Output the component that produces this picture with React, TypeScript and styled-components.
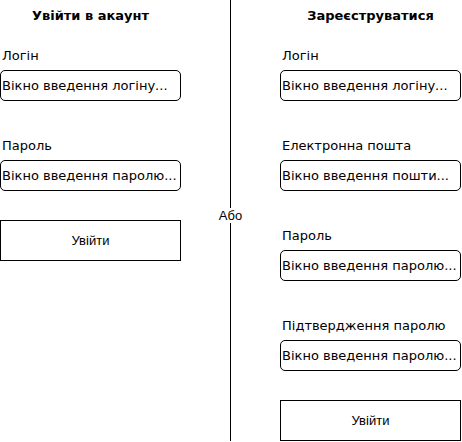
import React, { useId } from "react";
import styled, { createGlobalStyle } from "styled-components";

const GlobalStyle = createGlobalStyle`
  *, *::before, *::after {
    box-sizing: border-box;
  }
  body {
    margin: 0;
    background: #fff;
    color: #000;
    font-family: "DejaVu Sans", Verdana, sans-serif;
    font-size: 13px;
  }
`;

const Page = styled.main`
  display: grid;
  grid-template-columns: minmax(0, 1fr) 99px minmax(0, 1fr);
  padding-right: 1px;
`;

const Form = styled.form`
  display: flex;
  flex-direction: column;
`;

const Title = styled.h1`
  margin: 0 0 8px;
  font-size: 13px;
  line-height: 32px;
  text-align: center;
`;

const Field = styled.div`
  display: flex;
  flex-direction: column;
  margin-bottom: 29px;
`;

const Label = styled.label`
  padding: 2px 2px 0;
  line-height: 28px;
`;

const Input = styled.input`
  width: 100%;
  height: 31px;
  padding: 0 1px;
  border: 1px solid #000;
  border-radius: 5px;
  background: #fff;
  font: inherit;

  &::placeholder {
    color: #000;
    opacity: 1;
  }
`;

const SubmitButton = styled.button`
  height: 41px;
  border: 1px solid #000;
  background: #fff;
  color: #000;
  font-family: "Liberation Sans", Arial, sans-serif;
  font-size: 13px;
`;

const Divider = styled.div`
  display: flex;
  flex-direction: column;
  align-items: center;
  font-family: "Liberation Sans", Arial, sans-serif;
  font-size: 13px;
  line-height: 15px;

  &::before,
  &::after {
    content: "";
    width: 1px;
    flex: 20;
    background: #000;
  }

  &::after {
    flex: 21;
  }
`;

type FieldData = { label: string; placeholder: string; type: string };

function TextField({ label, placeholder, type }: FieldData) {
  const id = useId();
  return (
    <Field>
      <Label htmlFor={id}>{label}</Label>
      <Input id={id} type={type} placeholder={placeholder} />
    </Field>
  );
}

function AccountForm({ title, fields }: { title: string; fields: FieldData[] }) {
  return (
    <Form onSubmit={(event) => event.preventDefault()}>
      <Title>{title}</Title>
      {fields.map((field) => (
        <TextField key={field.label} {...field} />
      ))}
      <SubmitButton type="submit">Увійти</SubmitButton>
    </Form>
  );
}

const login: FieldData = { label: "Логін", placeholder: "Вікно введення логіну...", type: "text" };
const email: FieldData = { label: "Електронна пошта", placeholder: "Вікно введення пошти...", type: "email" };
const password: FieldData = { label: "Пароль", placeholder: "Вікно введення паролю...", type: "password" };
const confirmation: FieldData = { ...password, label: "Підтвердження паролю" };

export default function App() {
  return (
    <>
      <GlobalStyle />
      <Page>
        <AccountForm title="Увійти в акаунт" fields={[login, password]} />
        <Divider>Або</Divider>
        <AccountForm title="Зареєструватися" fields={[login, email, password, confirmation]} />
      </Page>
    </>
  );
}
